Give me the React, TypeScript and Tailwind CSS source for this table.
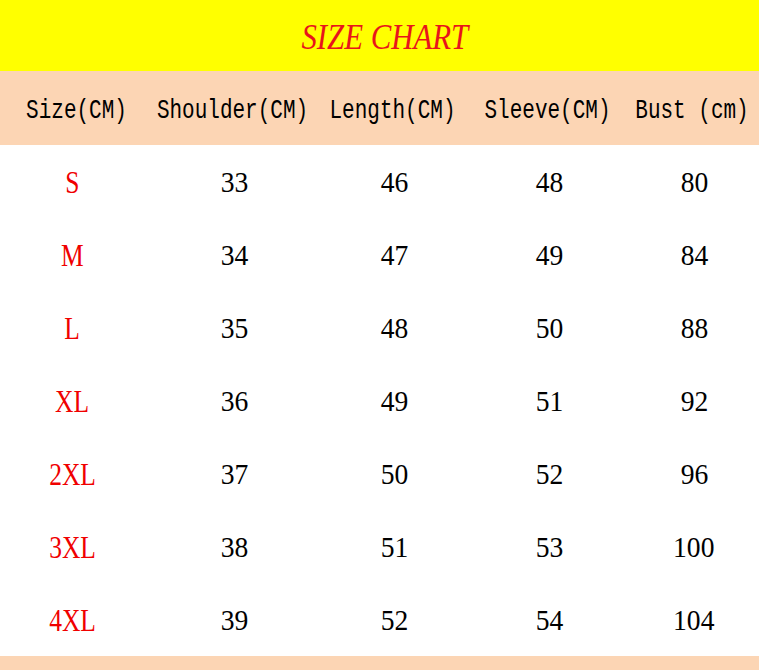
import React from "react";

const rows = [
  ["S", "33", "46", "48", "80"],
  ["M", "34", "47", "49", "84"],
  ["L", "35", "48", "50", "88"],
  ["XL", "36", "49", "51", "92"],
  ["2XL", "37", "50", "52", "96"],
  ["3XL", "38", "51", "53", "100"],
  ["4XL", "39", "52", "54", "104"],
];

const headers = ["Size(CM)", "Shoulder(CM)", "Length(CM)", "Sleeve(CM)", "Bust (cm)"];

const grid = "grid grid-cols-[150px_165px_155px_155px_1fr]";

export default function App() {
  return (
    <div className="w-[759px] h-[670px] bg-white overflow-hidden flex flex-col">
      <div className="h-[71px] bg-[#ffff00] flex items-center justify-center pl-[10px]">
        <span
          className="text-[#e8141b] italic text-[35px] leading-none scale-x-[0.88] mt-[3px]"
          style={{ fontFamily: '"Liberation Serif", serif' }}
        >
          SIZE CHART
        </span>
      </div>
      <div className={`${grid} h-[74px] bg-[#fcd5b4] items-center`}>
        {headers.map((h, i) => (
          <div key={h} className={`flex justify-center mt-[4px] ${i === 0 ? "pl-[3px]" : ""}`}>
            <span
              className="text-[21px] leading-none text-black scale-y-[1.3] whitespace-pre"
              style={{ fontFamily: '"Liberation Mono", monospace' }}
            >
              {h}
            </span>
          </div>
        ))}
      </div>
      {rows.map((r) => (
        <div key={r[0]} className={`${grid} h-[73px] items-center`} style={{ fontFamily: '"Liberation Serif", serif' }}>
          <div className="flex justify-center pr-[6px] mt-[2px]">
            <span className="text-[#f00000] text-[30px] leading-none scale-x-[0.85] scale-y-[1.05]">{r[0]}</span>
          </div>
          {r.slice(1).map((v, i) => (
            <div key={i} className="flex justify-center pl-[4px] mt-[2px]">
              <span className="text-black text-[29px] leading-none scale-x-[0.95]">{v}</span>
            </div>
          ))}
        </div>
      ))}
      <div className="flex-1 bg-[#fcd5b4]" />
    </div>
  );
}
